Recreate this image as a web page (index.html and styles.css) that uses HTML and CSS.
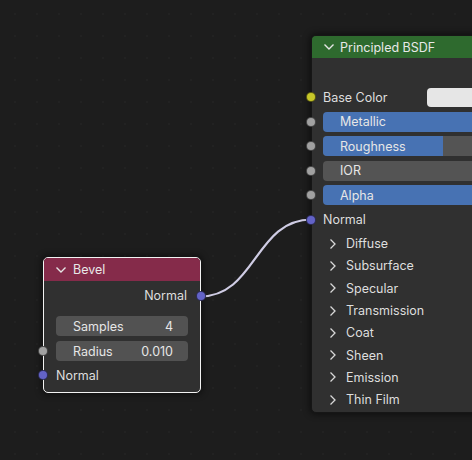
FILE: index.html
```html
<!DOCTYPE html>
<html>
<head>
<meta charset="utf-8">
<link rel="stylesheet" href="styles.css">
</head>
<body>
<div class="canvas">
  <svg class="links" width="472" height="460" viewBox="0 0 472 460">
    <path d="M200 296.5 C 256 296.5, 255 219.5, 311.5 219.5" fill="none" stroke="#cfcce4" stroke-width="2.2" stroke-linecap="round"/>
  </svg>

  <div class="node principled">
    <div class="node-header green">
      <svg class="chev-down" width="12" height="8" viewBox="0 0 12 8"><polyline points="1.5,1.5 6,6 10.5,1.5" fill="none" stroke="#e6e6e6" stroke-width="1.4"/></svg>
      <span>Principled BSDF</span>
    </div>
    <div class="node-body">
      <div class="out-spacer"></div>
      <div class="row">
        <span class="socket yellow"></span>
        <span class="label">Base Color</span>
        <span class="swatch"></span>
      </div>
      <div class="row">
        <span class="socket gray"></span>
        <div class="field blue"><span>Metallic</span></div>
      </div>
      <div class="row">
        <span class="socket gray"></span>
        <div class="field"><div class="fill" style="width:120px"></div><span>Roughness</span></div>
      </div>
      <div class="row">
        <span class="socket gray"></span>
        <div class="field"><span>IOR</span></div>
      </div>
      <div class="row">
        <span class="socket gray"></span>
        <div class="field blue"><span>Alpha</span></div>
      </div>
      <div class="row">
        <span class="socket purple"></span>
        <span class="label">Normal</span>
      </div>
      <div class="panel first"><svg class="chev-right" width="8" height="12" viewBox="0 0 8 12"><polyline points="1.5,1.5 6,6 1.5,10.5" fill="none" stroke="#d8d8d8" stroke-width="1.3"/></svg><span>Diffuse</span></div>
      <div class="panel"><svg class="chev-right" width="8" height="12" viewBox="0 0 8 12"><polyline points="1.5,1.5 6,6 1.5,10.5" fill="none" stroke="#d8d8d8" stroke-width="1.3"/></svg><span>Subsurface</span></div>
      <div class="panel"><svg class="chev-right" width="8" height="12" viewBox="0 0 8 12"><polyline points="1.5,1.5 6,6 1.5,10.5" fill="none" stroke="#d8d8d8" stroke-width="1.3"/></svg><span>Specular</span></div>
      <div class="panel"><svg class="chev-right" width="8" height="12" viewBox="0 0 8 12"><polyline points="1.5,1.5 6,6 1.5,10.5" fill="none" stroke="#d8d8d8" stroke-width="1.3"/></svg><span>Transmission</span></div>
      <div class="panel"><svg class="chev-right" width="8" height="12" viewBox="0 0 8 12"><polyline points="1.5,1.5 6,6 1.5,10.5" fill="none" stroke="#d8d8d8" stroke-width="1.3"/></svg><span>Coat</span></div>
      <div class="panel"><svg class="chev-right" width="8" height="12" viewBox="0 0 8 12"><polyline points="1.5,1.5 6,6 1.5,10.5" fill="none" stroke="#d8d8d8" stroke-width="1.3"/></svg><span>Sheen</span></div>
      <div class="panel"><svg class="chev-right" width="8" height="12" viewBox="0 0 8 12"><polyline points="1.5,1.5 6,6 1.5,10.5" fill="none" stroke="#d8d8d8" stroke-width="1.3"/></svg><span>Emission</span></div>
      <div class="panel"><svg class="chev-right" width="8" height="12" viewBox="0 0 8 12"><polyline points="1.5,1.5 6,6 1.5,10.5" fill="none" stroke="#d8d8d8" stroke-width="1.3"/></svg><span>Thin Film</span></div>
    </div>
  </div>

  <div class="node bevel">
    <div class="node-header maroon">
      <svg class="chev-down" width="12" height="8" viewBox="0 0 12 8"><polyline points="1.5,1.5 6,6 10.5,1.5" fill="none" stroke="#e6e6e6" stroke-width="1.4"/></svg>
      <span>Bevel</span>
    </div>
    <div class="node-body bevel-body">
      <div class="brow out">
        <span class="label">Normal</span>
        <span class="socket purple right"></span>
      </div>
      <div class="brow fieldrow first">
        <div class="field num"><span>Samples</span><span class="val">4</span></div>
      </div>
      <div class="brow fieldrow">
        <span class="socket gray"></span>
        <div class="field num"><span>Radius</span><span class="val">0.010</span></div>
      </div>
      <div class="brow in">
        <span class="socket purple"></span>
        <span class="label">Normal</span>
      </div>
    </div>
  </div>
</div>
</body>
</html>
```

FILE: styles.css
```css
* { box-sizing: border-box; }
html, body { margin: 0; padding: 0; }
body {
  background: #1d1d1d;
  font-family: Inter, "Noto Sans", "DejaVu Sans", sans-serif;
  font-size: 12.5px;
  color: #dedede;
}
.canvas {
  position: relative;
  width: 472px;
  height: 460px;
  overflow: hidden;
  background-color: #1d1d1d;
  background-image: radial-gradient(circle, #222222 0.9px, transparent 1.2px);
  background-size: 22px 22px;
  background-position: 4px 3px;
}
.links {
  position: absolute;
  left: 0;
  top: 0;
  z-index: 1;
  pointer-events: none;
}
.node {
  position: absolute;
  background: #303030;
  border-radius: 5px;
  box-shadow: 0 0 6px 2px rgba(0,0,0,0.45);
  z-index: 2;
}
.principled {
  left: 311px;
  top: 35px;
  width: 270px;
  height: 378px;
  border: 1px solid #161616;
}
.bevel {
  left: 43px;
  top: 257px;
  width: 158px;
  height: 136px;
  border: 1px solid #f2f2f2;
}
.node-header {
  height: 22px;
  display: flex;
  align-items: center;
  color: #e8e8e8;
  border-radius: 4px 4px 0 0;
}
.node-header.green { background: #2e6a2e; padding-left: 11px; height: 22px; }
.node-header.maroon { background: #852b4a; padding-left: 11px; height: 23px; }
.maroon .chev-down { margin-right: 6px; }
.chev-down { margin-right: 5px; flex: none; }
.node-body { position: relative; }
.out-spacer { height: 27px; }

.row {
  position: relative;
  height: 24.5px;
  display: flex;
  align-items: center;
  padding-left: 11px;
}
.socket {
  position: absolute;
  width: 10px;
  height: 10px;
  border-radius: 50%;
  left: -6px;
  top: 50%;
  margin-top: -5px;
  z-index: 3;
  border: 1px solid rgba(0,0,0,0.55);
}
.socket.right { left: auto; right: -6px; }
.socket.yellow { background: #c7c729; }
.socket.gray { background: #a1a1a1; }
.socket.purple { background: #6363c7; }
.label { white-space: nowrap; }
.swatch {
  margin-left: 40px;
  width: 80px;
  height: 19.5px;
  background: #e6e6e6;
  border-radius: 4px;
}
.field {
  position: relative;
  height: 20px;
  flex: 1;
  background: #545454;
  border-radius: 4px;
  display: flex;
  align-items: center;
  padding-left: 17px;
  overflow: hidden;
  color: #e6e6e6;
}
.field.blue { background: #4772b3; }
.field .fill {
  position: absolute;
  left: 0; top: 0; bottom: 0;
  background: #4772b3;
}
.field span { position: relative; }
.panel {
  height: 22.3px;
  display: flex;
  align-items: center;
  padding-left: 17px;
}
.panel.first { margin-top: 0.5px; }
.chev-right { margin-right: 9px; flex: none; }

.bevel-body { padding-top: 2px; }
.brow {
  position: relative;
  display: flex;
  align-items: center;
}
.brow.out {
  height: 25px;
  justify-content: flex-end;
  padding-right: 13px;
}
.brow.fieldrow {
  height: 20px;
  margin-top: 5px;
  padding-left: 12px;
  padding-right: 12px;
}
.brow.fieldrow.first { margin-top: 8px; }
.field.num {
  background: #525252;
  justify-content: space-between;
  padding-right: 15px;
}
.brow.in {
  height: 24px;
  margin-top: 2px;
  padding-left: 12px;
}
```
